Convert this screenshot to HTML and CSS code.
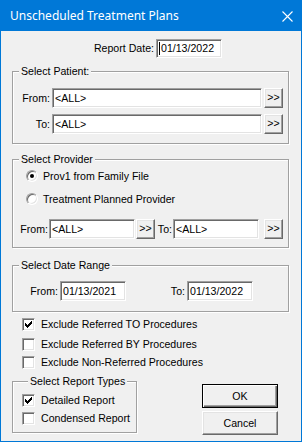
FILE: index.html
```html
<!DOCTYPE html>
<html lang="en">
<head>
    <meta charset="UTF-8">
    <meta name="viewport" content="width=device-width, initial-scale=1.0">
    <title>Unscheduled Treatment Plans</title>
    <link rel="stylesheet" href="styles.css">
</head>
<body>
    <div class="window">
        <div class="titlebar">
            <span class="title">Unscheduled Treatment Plans</span>
            <svg class="close" width="11" height="11" viewBox="0 0 11 11">
                <path d="M0.5 0.5L10.5 10.5M10.5 0.5L0.5 10.5" stroke="#fff" stroke-width="1.1" fill="none"/>
            </svg>
        </div>

        <div class="client">
            <div class="report-row">
                <span class="lbl">Report Date:</span>
                <span class="edit date"><span class="caret"></span>01/13/2022</span>
            </div>

            <fieldset class="group patient">
                <legend>Select Patient:</legend>
                <div class="row">
                    <span class="lbl">From:</span>
                    <span class="edit wide">&lt;ALL&gt;</span>
                    <span class="btn pick">&gt;&gt;</span>
                </div>
                <div class="row second">
                    <span class="lbl">To:</span>
                    <span class="edit wide">&lt;ALL&gt;</span>
                    <span class="btn pick">&gt;&gt;</span>
                </div>
            </fieldset>

            <fieldset class="group provider">
                <legend>Select Provider</legend>
                <div class="opt first">
                    <span class="radio checked"></span>
                    <span>Prov1 from Family File</span>
                </div>
                <div class="opt second">
                    <span class="radio"></span>
                    <span>Treatment Planned Provider</span>
                </div>
                <div class="row split">
                    <span class="lbl from">From:</span>
                    <span class="edit half">&lt;ALL&gt;</span>
                    <span class="btn pick near">&gt;&gt;</span>
                    <span class="lbl to">To:</span>
                    <span class="edit half">&lt;ALL&gt;</span>
                    <span class="btn pick far">&gt;&gt;</span>
                </div>
            </fieldset>

            <fieldset class="group dates">
                <legend>Select Date Range</legend>
                <div class="row">
                    <span class="lbl from">From:</span>
                    <span class="edit date">01/13/2021</span>
                    <span class="lbl to">To:</span>
                    <span class="edit date">01/13/2022</span>
                </div>
            </fieldset>

            <div class="checks">
                <div class="check first">
                    <span class="box checked"><svg width="7" height="7" viewBox="0 0 7 7"><path d="M0 2h1v3H0zM1 3h1v3H1zM2 4h1v3H2zM3 3h1v3H3zM4 2h1v3H4zM5 1h1v3H5zM6 0h1v3H6z" fill="#000"/></svg></span>
                    <span>Exclude Referred TO Procedures</span>
                </div>
                <div class="check">
                    <span class="box"></span>
                    <span>Exclude Referred BY Procedures</span>
                </div>
                <div class="check last">
                    <span class="box"></span>
                    <span>Exclude Non-Referred Procedures</span>
                </div>
            </div>

            <div class="bottom">
                <fieldset class="group types">
                    <legend>Select Report Types</legend>
                    <div class="check">
                        <span class="box checked"><svg width="7" height="7" viewBox="0 0 7 7"><path d="M0 2h1v3H0zM1 3h1v3H1zM2 4h1v3H2zM3 3h1v3H3zM4 2h1v3H4zM5 1h1v3H5zM6 0h1v3H6z" fill="#000"/></svg></span>
                        <span>Detailed Report</span>
                    </div>
                    <div class="check">
                        <span class="box"></span>
                        <span>Condensed Report</span>
                    </div>
                </fieldset>
                <div class="actions">
                    <span class="btn push default">OK</span>
                    <span class="btn push">Cancel</span>
                </div>
            </div>
        </div>
    </div>
</body>
</html>
```

FILE: styles.css
```css
:root {
    --accent: #0078d7;
    --face: #f0f0f0;
    --light: #e3e3e3;
    --shadow: #a0a0a0;
    --dark: #696969;
    --white: #ffffff;
}

* {
    margin: 0;
    padding: 0;
    box-sizing: border-box;
}

body {
    width: 302px;
    height: 442px;
    overflow: hidden;
    font-family: 'Liberation Sans', Arial, sans-serif;
    font-size: 10.6px;
    line-height: 13px;
    color: #000;
    background-color: var(--face);
}

.window {
    width: 302px;
    height: 442px;
    border: 1px solid var(--accent);
    display: flex;
    flex-direction: column;
}

.titlebar {
    height: 30px;
    background-color: var(--accent);
    display: flex;
    align-items: center;
    justify-content: space-between;
    padding: 0 8px 0 9px;
}

.title {
    font-family: 'Noto Sans', sans-serif;
    font-size: 12px;
    color: var(--white);
    line-height: 16px;
}

.close {
    display: block;
}

.client {
    flex: 1;
    padding: 8px 12px 0 11px;
    display: flex;
    flex-direction: column;
}

/* sunken edit box */
.edit {
    display: flex;
    align-items: center;
    height: 20px;
    padding-left: 2px;
    background-color: var(--white);
    border: 1px solid;
    border-color: var(--shadow) var(--white) var(--white) var(--shadow);
    box-shadow: inset 1px 1px 0 var(--dark), inset -1px -1px 0 var(--light);
    white-space: nowrap;
}

.edit.wide {
    width: 210px;
}

.edit.half {
    width: 86px;
}

.edit.date {
    width: 66px;
}

/* raised button */
.btn {
    display: flex;
    align-items: center;
    justify-content: center;
    background-color: var(--face);
    border: 1px solid;
    border-color: var(--white) var(--dark) var(--dark) var(--white);
    box-shadow: inset -1px -1px 0 var(--shadow), inset 1px 1px 0 var(--light);
}

.btn.pick {
    width: 19px;
    height: 20px;
    margin-left: 2px;
    padding-bottom: 1px;
}

.lbl {
    text-align: right;
    white-space: nowrap;
}

.report-row {
    display: flex;
    align-items: center;
    padding-left: 72px;
}

.report-row .lbl {
    width: 70px;
    margin-right: 2px;
}

.report-row .edit {
    height: 19px;
}

.caret {
    width: 1px;
    height: 13px;
    background-color: #000;
    margin-right: 1px;
}

/* etched group box */
.group {
    border: 1px solid var(--shadow);
    box-shadow: inset 1px 1px 0 var(--white), 1px 1px 0 var(--white);
    min-width: 0;
}

.group legend {
    margin-left: 6px;
    padding: 0 2px;
    line-height: 13px;
    background-color: var(--face);
}

.row {
    display: flex;
    align-items: center;
}

.patient {
    width: 277px;
    margin-top: 7px;
    padding: 10px 0 9px;
}

.patient .lbl {
    width: 37px;
    margin-right: 2px;
}

.patient .row.second {
    margin-top: 6px;
}

.provider {
    width: 277px;
    margin-top: 9px;
    padding: 3px 0 8px;
}

.opt {
    display: flex;
    align-items: center;
    height: 14px;
    padding-left: 13px;
}

.opt.second {
    margin-top: 9px;
}

.radio {
    display: flex;
    align-items: center;
    justify-content: center;
    width: 12px;
    height: 12px;
    margin-right: 5px;
    border-radius: 50%;
    background-color: var(--white);
    border: 1px solid;
    border-color: var(--shadow) var(--white) var(--white) var(--shadow);
    box-shadow: inset 1px 1px 0 var(--dark), inset -1px -1px 0 var(--light);
}

.radio.checked::after {
    content: "";
    width: 4px;
    height: 4px;
    border-radius: 50%;
    background-color: #000;
}

.row.split {
    margin-top: 13px;
}

.split .lbl.from {
    width: 35px;
    margin-right: 1px;
}

.split .btn.near {
    margin-left: 1px;
}

.split .lbl.to {
    width: 17px;
    margin-right: 1px;
}

.split .btn.far {
    margin-left: 5px;
}

.dates {
    width: 277px;
    margin-top: 11px;
    padding: 9px 0 10px;
}

.dates .lbl.from {
    width: 45px;
    margin-right: 2px;
}

.dates .lbl.to {
    width: 59px;
    margin-right: 2px;
}

/* checkboxes */
.check {
    display: flex;
    align-items: center;
    height: 14px;
}

.box {
    display: flex;
    align-items: center;
    justify-content: center;
    width: 13px;
    height: 13px;
    margin-right: 6px;
    background-color: var(--white);
    border: 1px solid;
    border-color: var(--shadow) var(--white) var(--white) var(--shadow);
    box-shadow: inset 1px 1px 0 var(--dark), inset -1px -1px 0 var(--light);
}

.box svg {
    display: block;
    shape-rendering: crispEdges;
}

.checks {
    margin-top: 5px;
    padding-left: 10px;
}

.checks .check + .check {
    margin-top: 6px;
}

.checks .check.last {
    margin-top: 4px;
}

.bottom {
    display: flex;
    align-items: flex-start;
    margin-top: 6px;
}

.types {
    width: 125px;
    padding: 5px 0 7px 9px;
}

.types .check + .check {
    margin-top: 4px;
}

.actions {
    display: flex;
    flex-direction: column;
    margin: 9px 0 0 65px;
}

.btn.push {
    width: 76px;
    height: 24px;
    margin-bottom: 3px;
}

.btn.push.default {
    border-color: #000;
    box-shadow: inset 1px 1px 0 var(--white), inset -1px -1px 0 var(--dark), inset -2px -2px 0 var(--shadow);
}
```
